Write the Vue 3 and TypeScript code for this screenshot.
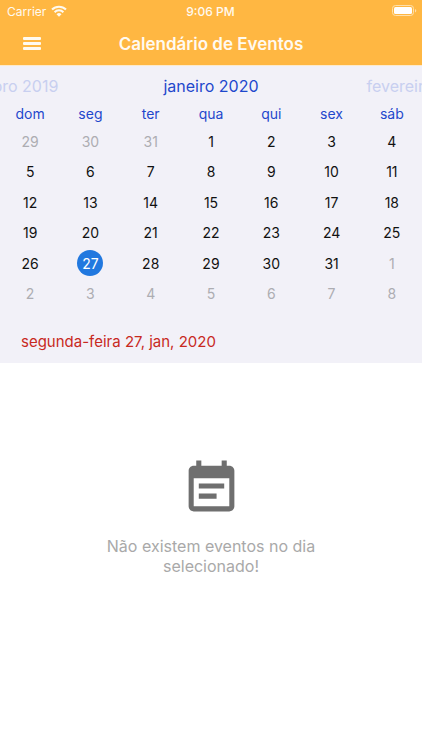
<script setup lang="ts">
import { computed, ref } from 'vue'

interface Day {
  key: string
  label: number
  outside: boolean
}

const weekdays: string[] = ['dom', 'seg', 'ter', 'qua', 'qui', 'sex', 'sáb']
const selected = ref('0-27')

const weeks = computed<Day[][]>(() => {
  const rows: Day[][] = []
  for (let w = 0; w < 6; w++) {
    const row: Day[] = []
    for (let d = 0; d < 7; d++) {
      const n = w * 7 + d - 2
      const month = n < 1 ? -1 : n > 31 ? 1 : 0
      const label = month === -1 ? n + 31 : month === 1 ? n - 31 : n
      row.push({ key: `${month}-${label}`, label, outside: month !== 0 })
    }
    rows.push(row)
  }
  return rows
})
</script>

<template>
  <div class="screen">
    <header class="top">
      <div class="status">
        <div class="carrier">
          <span>Carrier</span>
          <svg class="wifi" viewBox="0 0 16 12" aria-hidden="true">
            <path d="M1 4.500a10 10 0 0 1 14 0" />
            <path d="M3.600 7.200a6.200 6.200 0 0 1 8.800 0" />
            <path class="dot" d="M8 11.800 5.500 9.300a3.500 3.500 0 0 1 5 0z" />
          </svg>
        </div>
        <span class="time">9:06 PM</span>
        <svg class="battery" viewBox="0 0 25 12" aria-hidden="true">
          <rect class="shell" x="0.5" y="0.5" width="21" height="10" rx="3" />
          <rect x="2" y="2" width="18" height="7" rx="1.5" />
          <path class="tip" d="M23 4v3.500q1.300-.5 1.300-1.750T23 4z" />
        </svg>
      </div>
      <div class="bar">
        <button class="menu" type="button" aria-label="Menu">
          <svg viewBox="0 0 18 14" aria-hidden="true">
            <rect width="18" height="3" rx="1" />
            <rect y="5" width="18" height="3" rx="1" />
            <rect y="10" width="18" height="3" rx="1" />
          </svg>
        </button>
        <h1>Calendário de Eventos</h1>
      </div>
    </header>

    <section class="calendar">
      <div class="months">
        <button type="button" class="month faded">dezembro 2019</button>
        <h2 class="month">janeiro 2020</h2>
        <button type="button" class="month faded">fevereiro 2020</button>
      </div>
      <table>
        <thead>
          <tr>
            <th v-for="name in weekdays" :key="name" scope="col">{{ name }}</th>
          </tr>
        </thead>
        <tbody>
          <tr v-for="(week, i) in weeks" :key="i">
            <td v-for="day in week" :key="day.key">
              <button
                type="button"
                class="day"
                :class="{ outside: day.outside, selected: day.key === selected }"
                @click="selected = day.key"
              >{{ day.label }}</button>
            </td>
          </tr>
        </tbody>
      </table>
      <p class="current">segunda-feira 27, jan, 2020</p>
    </section>

    <main class="empty">
      <svg viewBox="0 0 24 24" aria-hidden="true">
        <path d="M17 10H7v2h10v-2zm2-7h-1V1h-2v2H8V1H6v2H5c-1.110 0-1.990.9-1.990 2L3 19c0 1.100.890 2 2 2h14c1.100 0 2-.9 2-2V5c0-1.100-.9-2-2-2zm0 16H5V8h14v11zm-5-5H7v2h7v-2z" />
      </svg>
      <p>Não existem eventos no dia selecionado!</p>
    </main>
  </div>
</template>

<style>
body {
  background: #fff;
}
</style>

<style scoped>
.screen {
  min-height: 100vh;
  overflow: hidden;
  font-family: Inter, 'Liberation Sans', sans-serif;
}
button {
  border: 0;
  padding: 0;
  background: none;
  font: inherit;
  color: inherit;
  cursor: pointer;
}
h1,
h2,
p {
  margin: 0;
}
svg {
  display: block;
}
.top {
  border-bottom: 1px solid #fdeacb;
  background: #ffb742;
  color: #fffaf0;
}
.status {
  display: grid;
  grid-template-columns: 1fr auto 1fr;
  align-items: center;
  height: 22px;
  padding: 0 8px 0 7px;
  font-size: 12px;
}
.carrier {
  display: flex;
  align-items: center;
  gap: 5px;
}
.wifi {
  width: 16px;
  height: 12px;
  fill: none;
  stroke: currentColor;
  stroke-width: 2;
}
.wifi .dot {
  fill: currentColor;
  stroke: none;
}
.time {
  font-weight: 500;
}
.battery {
  justify-self: end;
  width: 25px;
  height: 12px;
  margin-right: -3px;
  fill: #fff;
}
.battery .shell {
  fill: none;
  stroke: #ffe0ab;
}
.battery .tip {
  fill: #ffe0ab;
}
.bar {
  display: grid;
  grid-template-columns: 64px 1fr 64px;
  align-items: center;
  height: 43px;
}
.menu {
  display: flex;
  justify-content: center;
  align-items: center;
  height: 43px;
}
.menu svg {
  width: 18px;
  height: 14px;
  fill: currentColor;
}
h1 {
  font-size: 17px;
  font-weight: 600;
  text-align: center;
  white-space: nowrap;
}
.calendar {
  background: #f2f1f8;
}
.months {
  display: grid;
  grid-template-columns: repeat(3, 1fr);
  width: 150%;
  margin-left: -25%;
  padding-top: 8px;
}
.month {
  font-size: 16px;
  font-weight: 400;
  line-height: 24px;
  text-align: center;
  color: #1f48cc;
}
.faded {
  color: #c8cff0;
}
table,
thead {
  display: block;
}
tr {
  display: grid;
  grid-template-columns: repeat(7, 1fr);
  align-items: center;
}
th {
  padding: 4px 0 0;
  font-size: 14px;
  font-weight: 400;
  line-height: 24px;
  color: #1f48cc;
}
tbody {
  display: grid;
  grid-template-rows: repeat(6, 1fr);
  height: 183px;
}
td {
  display: flex;
  justify-content: center;
  padding: 0;
}
.day {
  width: 26px;
  height: 26px;
  border-radius: 50%;
  font-size: 14px;
  color: #111;
}
.day.outside {
  color: #adadb2;
}
.day.selected {
  background: #2178df;
  color: #fff;
}
.current {
  padding: 21px 21px 9px;
  font-size: 15px;
  line-height: 24px;
  color: #c8291e;
}
.empty {
  display: flex;
  flex-direction: column;
  align-items: center;
  gap: 17px;
  padding-top: 95px;
}
.empty svg {
  width: 61px;
  height: 61px;
  fill: #6f6f6f;
}
.empty p {
  max-width: 240px;
  font-size: 16px;
  line-height: 20px;
  text-align: center;
  color: #a9a9a9;
}
</style>
